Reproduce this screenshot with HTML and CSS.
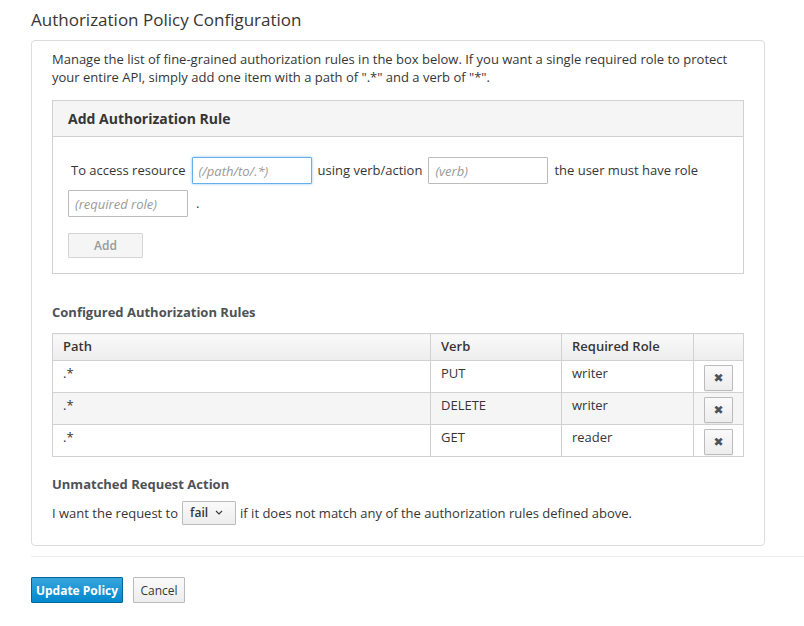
FILE: index.html
```html
<!DOCTYPE html>
<html>
<head>
<meta charset="utf-8">
<link rel="stylesheet" href="styles.css">
</head>
<body>
<div class="page">
  <h2 class="title">Authorization Policy Configuration</h2>
  <div class="card">
    <p class="intro">Manage the list of fine-grained authorization rules in the box below. If you want a single required role to protect your entire API, simply add one item with a path of ".*" and a verb of "*".</p>
    <div class="panel">
      <div class="panel-head">Add Authorization Rule</div>
      <div class="panel-body">
        <div class="rule-row">
          <span class="lbl first">To access resource</span>
          <input class="field focus" type="text" placeholder="(/path/to/.*)">
          <span class="lbl">using verb/action</span>
          <input class="field" type="text" placeholder="(verb)">
          <span class="lbl">the user must have role</span>
          <input class="field" type="text" placeholder="(required role)">
          <span class="lbl dot">.</span>
        </div>
        <button class="btn-add" disabled>Add</button>
      </div>
    </div>

    <h4 class="sub">Configured Authorization Rules</h4>
    <table class="rules">
      <thead>
        <tr><th class="c-path">Path</th><th class="c-verb">Verb</th><th class="c-role">Required Role</th><th class="c-act"></th></tr>
      </thead>
      <tbody>
        <tr><td>.*</td><td>PUT</td><td>writer</td><td class="act"><button class="btn-del">&#x2716;</button></td></tr>
        <tr class="odd"><td>.*</td><td>DELETE</td><td>writer</td><td class="act"><button class="btn-del">&#x2716;</button></td></tr>
        <tr><td>.*</td><td>GET</td><td>reader</td><td class="act"><button class="btn-del">&#x2716;</button></td></tr>
      </tbody>
    </table>

    <h4 class="sub sub2">Unmatched Request Action</h4>
    <div class="unmatched">
      <span>I want the request to</span>
      <span class="select">fail <svg width="8" height="5" viewBox="0 0 8 5"><path d="M1 1 L4 4 L7 1" fill="none" stroke="#363636" stroke-width="1.1"/></svg></span>
      <span>if it does not match any of the authorization rules defined above.</span>
    </div>
  </div>
  <div class="divider"></div>
  <div class="actions">
    <button class="btn-primary">Update Policy</button>
    <button class="btn-default">Cancel</button>
  </div>
</div>
</body>
</html>
```

FILE: styles.css
```css
html, body {
  margin: 0;
  padding: 0;
  background: #fff;
}
body {
  font-family: "Open Sans", "Liberation Sans", sans-serif;
  font-size: 13px;
  color: #363636;
}
.page {
  padding: 9px 0 0 31px;
}
.title {
  margin: 0;
  font-size: 17px;
  font-weight: 400;
  line-height: 22px;
  color: #363636;
}
.card {
  margin-top: 9px;
  width: 692px;
  border: 1px solid #dcdcdc;
  border-radius: 4px;
  padding: 9px 20px 20px 20px;
}
.intro {
  margin: 0;
  line-height: 18px;
}
.panel {
  margin-top: 14px;
  border: 1px solid #d1d1d1;
}
.panel-head {
  background: #f5f5f5;
  border-bottom: 1px solid #d1d1d1;
  height: 35px;
  line-height: 36px;
  padding-left: 15px;
  font-weight: 700;
  font-size: 14px;
}
.panel-body {
  padding: 20px 15px 15px 15px;
}
.rule-row {
  display: flex;
  flex-wrap: wrap;
  align-items: center;
  column-gap: 6px;
  row-gap: 6px;
}
.lbl {
  line-height: 27px;
}
.lbl.first {
  margin-left: 3px;
}
.lbl.dot {
  margin-left: 2px;
}
.field {
  box-sizing: border-box;
  width: 120px;
  height: 27px;
  border: 1px solid #bbb;
  border-radius: 1px;
  padding: 0 6px;
  font-family: "Open Sans", "Liberation Sans", sans-serif;
  font-size: 13px;
  color: #363636;
  outline: none;
}
.field::placeholder {
  color: #999;
  font-style: italic;
}
.field.focus {
  border-color: #66afe9;
  box-shadow: 0 0 3px rgba(102, 175, 233, 0.7);
}
.btn-add {
  display: block;
  margin-top: 16px;
  width: 75px;
  height: 25px;
  background: #f5f5f5;
  border: 1px solid #d4d4d4;
  border-radius: 1px;
  color: #9a9a9a;
  font-family: "Open Sans", "Liberation Sans", sans-serif;
  font-size: 12px;
  font-weight: 600;
  padding: 0;
}
.sub {
  margin: 29px 0 0 0;
  font-size: 13px;
  font-weight: 700;
  line-height: 18px;
  color: #4d5258;
}
.rules {
  margin-top: 12px;
  width: 692px;
  border-collapse: collapse;
  border: 1px solid #d1d1d1;
}
.rules th, .rules td {
  border: 1px solid #d1d1d1;
  text-align: left;
  padding: 0 10px;
  vertical-align: top;
}
.rules th {
  height: 26px;
  line-height: 25px;
  font-weight: 600;
  background: linear-gradient(#fafafa, #ededed);
}
.rules td {
  height: 31px;
  line-height: 24px;
}
.rules tr.odd td {
  background: #f5f5f5;
}
.c-path { width: 357px; }
.c-verb { width: 110px; }
.c-role { width: 111px; }
.rules td.act {
  vertical-align: top;
  padding: 0 0 0 10px;
}
.btn-del {
  display: block;
  margin-top: 4px;
  width: 29px;
  height: 26px;
  background: linear-gradient(#fafafa, #ededed);
  border: 1px solid #bbb;
  border-radius: 1px;
  color: #4d5258;
  font-size: 12px;
  padding: 0;
  line-height: 24px;
  box-shadow: 0 1px 1px rgba(0,0,0,0.05);
  font-family: "DejaVu Sans", sans-serif;
}
.sub2 {
  margin-top: 18px;
}
.unmatched {
  margin-top: 8px;
  display: flex;
  align-items: center;
  gap: 4px;
}
.select {
  box-sizing: border-box;
  display: inline-flex;
  align-items: center;
  gap: 7px;
  height: 24px;
  width: 54px;
  padding: 0 0 2px 7px;
  border: 1px solid #bbb;
  border-radius: 1px;
  background: linear-gradient(#fafafa, #ededed);
  font-weight: 600;
  font-size: 12px;
}
.divider {
  margin-top: 10px;
  border-top: 1px solid #ececec;
}
.actions {
  margin-top: 20px;
  display: flex;
  gap: 10px;
}
.btn-primary {
  height: 26px;
  width: 92px;
  padding: 0;
  background: linear-gradient(#39a5dc, #0088ce);
  border: 1px solid #00659c;
  border-radius: 1px;
  color: #fff;
  font-family: "Open Sans", "Liberation Sans", sans-serif;
  font-size: 12px;
  font-weight: 700;
}
.btn-default {
  height: 26px;
  width: 52px;
  padding: 0;
  background: linear-gradient(#fafafa, #ededed);
  border: 1px solid #bbb;
  border-radius: 1px;
  color: #363636;
  font-family: "Open Sans", "Liberation Sans", sans-serif;
  font-size: 12px;
  font-weight: 400;
  box-shadow: 0 1px 1px rgba(0,0,0,0.08);
}
```
